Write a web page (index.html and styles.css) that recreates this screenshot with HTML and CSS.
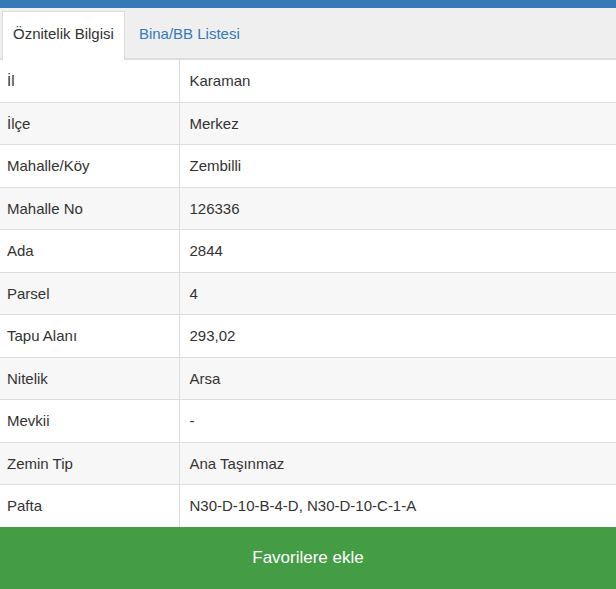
FILE: index.html
```html
<!DOCTYPE html>
<html lang="tr">

<head>
    <meta charset="UTF-8">
    <meta name="viewport" content="width=device-width, initial-scale=1.0">
    <title>Parsel Bilgisi</title>
    <link rel="stylesheet" href="styles.css">
</head>

<body>
    <div class="topbar"></div>
    <div class="tabs">
        <div class="tab active">Öznitelik Bilgisi</div>
        <div class="tab">Bina/BB Listesi</div>
    </div>
    <table class="info">
        <colgroup>
            <col class="labelcol">
            <col>
        </colgroup>
        <tr><td>İl</td><td>Karaman</td></tr>
        <tr><td>İlçe</td><td>Merkez</td></tr>
        <tr><td>Mahalle/Köy</td><td>Zembilli</td></tr>
        <tr><td>Mahalle No</td><td>126336</td></tr>
        <tr><td>Ada</td><td>2844</td></tr>
        <tr><td>Parsel</td><td>4</td></tr>
        <tr><td>Tapu Alanı</td><td>293,02</td></tr>
        <tr><td>Nitelik</td><td>Arsa</td></tr>
        <tr><td>Mevkii</td><td>-</td></tr>
        <tr><td>Zemin Tip</td><td>Ana Taşınmaz</td></tr>
        <tr><td>Pafta</td><td>N30-D-10-B-4-D, N30-D-10-C-1-A</td></tr>
    </table>
    <div class="favbtn">Favorilere ekle</div>
</body>

</html>
```

FILE: styles.css
```css
body {
    margin: 0;
    font-family: "Liberation Sans", Arial, sans-serif;
    font-size: 15px;
    color: #333;
    background-color: #fff;
}

.topbar {
    height: 8px;
    background-color: #337ab7;
}

.tabs {
    display: flex;
    background-color: #efefef;
    padding: 3px 0 0 2px;
    border-bottom: 2px solid #ddd;
    height: 47px;
    box-sizing: content-box;
}

.tab {
    padding: 13px 10px 0 10px;
    margin-right: 3px;
    color: #337ab7;
    border: 1px solid transparent;
}

.tab.active {
    background-color: #fff;
    color: #333;
    border-color: #ddd;
    border-bottom: none;
    margin-bottom: -2px;
}

.info {
    width: 100%;
    border-collapse: collapse;
    table-layout: fixed;
}

.labelcol {
    width: 179px;
}

.info td {
    padding: 10px 10px;
    line-height: 21.5px;
    border-bottom: 1px solid #ddd;
}

.info td:first-child {
    padding-left: 7px;
    border-right: 1px solid #ddd;
}

.info tr:nth-child(even) td {
    background-color: #f7f7f7;
}

.info tr:last-child td {
    border-bottom: none;
}

.favbtn {
    background-color: #449d44;
    color: #fff;
    text-align: center;
    font-size: 17px;
    padding: 20px 0 22px;
    line-height: 22px;
}
```
